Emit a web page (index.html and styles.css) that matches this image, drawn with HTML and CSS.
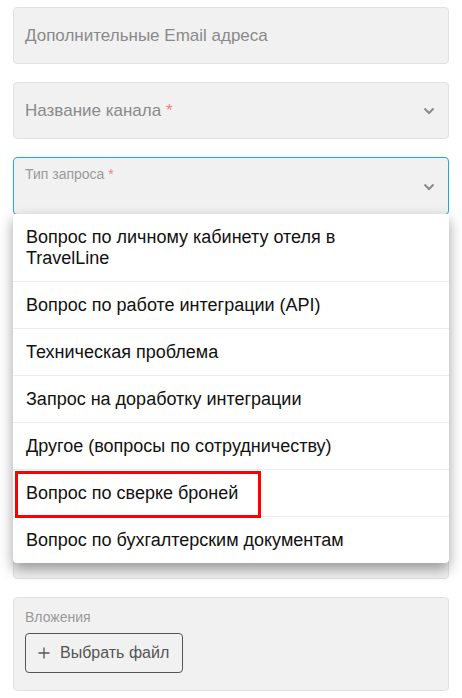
FILE: index.html
```html
<!DOCTYPE html>
<html lang="ru">
<head>
    <meta charset="utf-8">
    <title>Форма запроса</title>
    <link rel="stylesheet" href="styles.css">
</head>
<body>
<div id="form">
    <div class="field">
        <span class="placeholder">Дополнительные Email адреса</span>
    </div>

    <div class="field">
        <span class="placeholder">Название канала <span class="req">*</span></span>
        <svg class="chevron" width="12" height="8" viewBox="0 0 12 8"><path d="M1.5 1.5 L6 6 L10.5 1.5" fill="none" stroke="#8a8a8a" stroke-width="2"/></svg>
    </div>

    <div class="field field-open">
        <span class="label">Тип запроса <span class="req">*</span></span>
        <svg class="chevron" width="12" height="8" viewBox="0 0 12 8"><path d="M1.5 1.5 L6 6 L10.5 1.5" fill="none" stroke="#8a8a8a" stroke-width="2"/></svg>
        <ul class="menu">
            <li class="wide">Вопрос по личному кабинету отеля в TravelLine</li>
            <li>Вопрос по работе интеграции (API)</li>
            <li>Техническая проблема</li>
            <li>Запрос на доработку интеграции</li>
            <li>Другое (вопросы по сотрудничеству)</li>
            <li>Вопрос по сверке броней<span class="mark"></span></li>
            <li>Вопрос по бухгалтерским документам</li>
        </ul>
    </div>

    <div class="field field-text"></div>

    <div class="field field-files">
        <span class="label">Вложения</span>
        <button class="btn-file" type="button"><svg width="12" height="12" viewBox="0 0 12 12"><path d="M6 0.5 V11.5 M0.5 6 H11.5" stroke="#555" stroke-width="1.3"/></svg><span>Выбрать файл</span></button>
    </div>
</div>
</body>
</html>
```

FILE: styles.css
```css
html {
    overflow: hidden;
}

body {
    margin: 0;
    padding: 0;
    background: #fff;
    font-family: "Liberation Sans", Arial, sans-serif;
}

#form {
    padding: 7px 13px 0 13px;
    display: flex;
    flex-direction: column;
    gap: 18px;
}

.field {
    position: relative;
    box-sizing: border-box;
    height: 57px;
    background: #f1f1f1;
    border: 1px solid #e2e2e2;
    border-radius: 4px;
    display: flex;
    align-items: center;
    padding: 0 11px;
}

.placeholder {
    font-size: 17px;
    color: #8a8a8a;
}

.req {
    color: #f08080;
}

.chevron {
    position: absolute;
    right: 13px;
    top: 50%;
    margin-top: -4px;
}

.field-open {
    height: 58px;
    border-color: #2aa6de;
    align-items: flex-start;
}

.field-open .label {
    margin-top: 8px;
}

.label {
    font-size: 14px;
    color: #9a9a9a;
}

.field-open .chevron {
    margin-top: -3px;
}

.menu {
    position: absolute;
    top: 100%;
    left: -1px;
    right: -1px;
    margin: 0;
    padding: 0;
    list-style: none;
    background: #fff;
    border-radius: 0 0 4px 4px;
    box-shadow: 0 6px 14px rgba(0, 0, 0, 0.38);
    z-index: 2;
}

.menu li {
    position: relative;
    padding: 13px 13px 12px 13px;
    font-size: 18px;
    line-height: 21px;
    color: #111;
    border-bottom: 1px solid #ececec;
}

.menu li.wide {
    padding-right: 60px;
}

.menu li:last-child {
    border-bottom: none;
}

.mark {
    position: absolute;
    left: 2px;
    top: 1px;
    width: 246px;
    height: 47px;
    box-sizing: border-box;
    border: 3px solid #f00;
}

.field-text {
    height: 346px;
}

.field-files {
    height: 94px;
    flex-direction: column;
    align-items: flex-start;
    padding-top: 11px;
}

.btn-file {
    margin-top: 8px;
    box-sizing: border-box;
    height: 40px;
    width: 158px;
    background: transparent;
    border: 1px solid #555;
    border-radius: 4px;
    font-family: "Liberation Sans", Arial, sans-serif;
    font-size: 16px;
    color: #555;
    white-space: nowrap;
    display: flex;
    align-items: center;
    gap: 10px;
    padding: 0 0 0 12px;
}
```
